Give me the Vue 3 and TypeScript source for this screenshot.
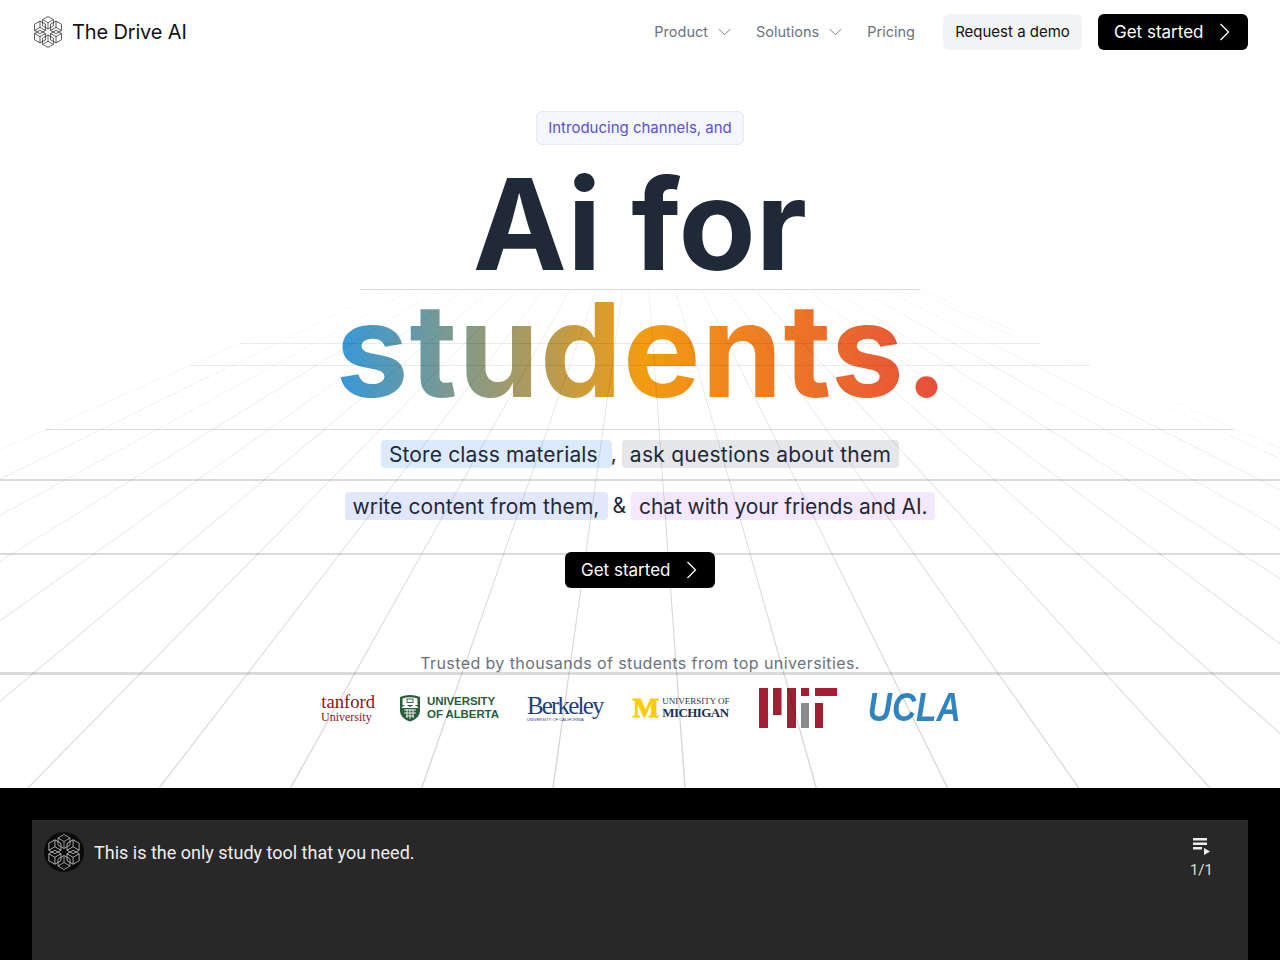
<script setup lang="ts">
const VX = 640
const VY = 165
const TOP = 289
const BOTTOM = 788

function wedge(offset: number): string {
  const at = (y: number) => VX + (offset * (y - VY)) / (BOTTOM - VY)
  const half = (y: number) => (0.75 * (y - VY)) / (BOTTOM - VY)
  return [
    `${at(TOP) - half(TOP)},${TOP}`,
    `${at(TOP) + half(TOP)},${TOP}`,
    `${at(BOTTOM) + half(BOTTOM)},${BOTTOM}`,
    `${at(BOTTOM) - half(BOTTOM)},${BOTTOM}`,
  ].join(' ')
}

const rays: string[] = []
for (let n = 0; n <= 10; n++) {
  rays.push(wedge(-87 - 131.3 * n))
  rays.push(wedge(45 + 131.3 * n))
}
rays.push(wedge(1407))

const rows = [
  { y: 289, x1: 360, x2: 920, h: 1, faint: false },
  { y: 343, x1: 240, x2: 1040, h: 1, faint: true },
  { y: 365, x1: 190, x2: 1090, h: 1, faint: true },
  { y: 429, x1: 46, x2: 1234, h: 1, faint: false },
  { y: 479, x1: 0, x2: 1280, h: 2, faint: false },
  { y: 553, x1: 0, x2: 1280, h: 2, faint: false },
  { y: 672, x1: 0, x2: 1280, h: 3, faint: false },
]

const cubeAngles = [0, 60, 120, 180, 240, 300]
</script>

<template>
  <div class="page">
    <header class="topbar">
      <div class="brand">
        <svg class="brand-mark" viewBox="-17 -17 34 34" aria-hidden="true">
          <g v-for="a in cubeAngles" :key="a" :transform="`rotate(${a})`" fill="none" stroke="#2a2a2a" stroke-width="0.75">
            <path d="M0 -16.500 L5.800 -13.200 L5.800 -6.500 L0 -3.200 L-5.800 -6.500 L-5.800 -13.200 Z" />
            <path d="M-5.800 -13.200 L0 -9.800 L5.800 -13.200 M0 -9.800 L0 -3.200" />
          </g>
        </svg>
        <span class="brand-name">The Drive AI</span>
      </div>
      <nav class="nav">
        <a class="nav-link">Product
          <svg class="chev" viewBox="0 0 14 8" aria-hidden="true"><path d="M1 1 L7 7 L13 1" /></svg>
        </a>
        <a class="nav-link">Solutions
          <svg class="chev" viewBox="0 0 14 8" aria-hidden="true"><path d="M1 1 L7 7 L13 1" /></svg>
        </a>
        <a class="nav-link">Pricing</a>
        <button class="btn-demo">Request a demo</button>
        <button class="btn-dark">Get started
          <svg class="arrow" viewBox="0 0 11 18" aria-hidden="true"><path d="M1.5 1 L9.5 9 L1.5 17" /></svg>
        </button>
      </nav>
    </header>

    <main class="hero">
      <div class="badge">Introducing channels, and</div>
      <h1 class="headline">
        <span class="line-one">Ai for</span>
        <span class="line-two">students.</span>
      </h1>
      <div class="pitch">
        <div class="pitch-row">
          <span class="chip chip-blue">Store class materials</span>
          <span class="joiner comma">,</span>
          <span class="chip chip-gray">ask questions about them</span>
        </div>
        <div class="pitch-row">
          <span class="chip chip-indigo">write content from them,</span>
          <span class="joiner">&amp;</span>
          <span class="chip chip-purple">chat with your friends and AI.</span>
        </div>
      </div>
      <button class="btn-dark cta">Get started
        <svg class="arrow" viewBox="0 0 11 18" aria-hidden="true"><path d="M1.5 1 L9.5 9 L1.5 17" /></svg>
      </button>
      <p class="trusted">Trusted by thousands of students from top universities.</p>
      <div class="logos">
        <div class="logo stanford">
          <span class="st-name">Stanford</span>
          <span class="st-sub">University</span>
        </div>
        <div class="logo alberta">
          <svg class="shield" viewBox="0 0 22 28" aria-hidden="true">
            <path d="M1 3 Q11 -1 21 3 L21 17 Q21 24 11 27.5 Q1 24 1 17 Z" fill="#275d38" />
            <path d="M3.5 4.5 Q11 2 18.500 4.500 L18.500 11 L3.500 11 Z" fill="#fff" />
            <rect x="8" y="5" width="6" height="3.500" fill="none" stroke="#275d38" stroke-width="0.9" />
            <path d="M3 13 L7 10.500 L11 13 L15 10.500 L19 13 L19 14 L3 14 Z" fill="#fff" />
            <path d="M5 16 H17 M5 19 H17 M7 22 H15 M8 15 V24 M11 15 V25 M14 15 V24" stroke="#fff" stroke-width="0.9" />
          </svg>
          <div class="al-text"><span>UNIVERSITY</span><span>OF ALBERTA</span></div>
        </div>
        <div class="logo berkeley">
          <span class="be-name">Berkeley</span>
          <span class="be-sub">UNIVERSITY OF CALIFORNIA</span>
        </div>
        <div class="logo michigan">
          <span class="mi-m">M</span>
          <div class="mi-text"><span class="mi-top">UNIVERSITY OF</span><span class="mi-bottom">MICHIGAN</span></div>
        </div>
        <svg class="logo mit" viewBox="0 0 78 40" aria-hidden="true">
          <rect x="0" y="0" width="9" height="40" fill="#a31f34" />
          <rect x="14" y="0" width="8.500" height="27" fill="#a31f34" />
          <rect x="28" y="0" width="9" height="40" fill="#a31f34" />
          <rect x="42" y="0" width="8" height="8" fill="#a31f34" />
          <rect x="42" y="15" width="8" height="25" fill="#8a8b8c" />
          <rect x="56" y="0" width="22" height="8" fill="#a31f34" />
          <rect x="56" y="15" width="8" height="25" fill="#a31f34" />
        </svg>
        <div class="logo ucla">UCLA</div>
      </div>
    </main>

    <svg class="grid" viewBox="0 0 1280 788" aria-hidden="true">
      <polygon v-for="(p, i) in rays" :key="i" :points="p" class="ray" />
      <rect
        v-for="r in rows"
        :key="r.y"
        :x="r.x1"
        :y="r.y"
        :width="r.x2 - r.x1"
        :height="r.h"
        :class="['row', { 'row-faint': r.faint }]"
      />
    </svg>

    <section class="video-band">
      <div class="player">
        <div class="player-head">
          <svg class="avatar" viewBox="-20 -20 40 40" aria-hidden="true">
            <circle r="20" fill="#0b0b0b" />
            <g v-for="a in cubeAngles" :key="a" :transform="`rotate(${a})`" fill="none" stroke="#bdbdbd" stroke-width="0.8">
              <path d="M0 -17.500 L6 -14 L6 -7 L0 -3.500 L-6 -7 L-6 -14 Z" />
              <path d="M-6 -14 L0 -10.500 L6 -14 M0 -10.500 L0 -3.500" />
            </g>
          </svg>
          <span class="video-title">This is the only study tool that you need.</span>
          <div class="queue">
            <svg class="queue-icon" viewBox="0 0 18 18" aria-hidden="true">
              <rect x="0" y="0" width="14" height="2.500" />
              <rect x="0" y="4.500" width="14" height="2.500" />
              <rect x="0" y="9" width="9" height="2.500" />
              <path d="M11 10 L17 13.500 L11 17 Z" />
            </svg>
            <span class="queue-count">1/1</span>
          </div>
        </div>
      </div>
    </section>
  </div>
</template>

<style>
html, body { margin: 0; background: #fff; }
</style>

<style scoped>
.page {
  position: relative;
  width: 1280px;
  height: 960px;
  overflow: hidden;
  background: #fff;
  font-family: Inter, "Liberation Sans", sans-serif;
}
.topbar {
  display: flex;
  align-items: center;
  justify-content: space-between;
  height: 36px;
  padding: 14px 32px 0;
}
.brand { display: flex; align-items: center; gap: 8px; }
.brand-mark { width: 32px; height: 32px; }
.brand-name { font-size: 20px; color: #111; letter-spacing: -0.15px; }
.nav { display: flex; align-items: center; }
.nav-link {
  display: flex;
  align-items: center;
  gap: 10px;
  margin-right: 25px;
  padding-bottom: 1px;
  font-size: 14.5px;
  color: #6b7280;
}
.chev { width: 13px; height: 8px; fill: none; stroke: #6b7280; stroke-width: 1; }
.btn-demo {
  height: 36px;
  width: 139px;
  margin-left: 3px;
  margin-right: 16px;
  padding: 0 0 1px;
  border: 0;
  border-radius: 6px;
  background: #f3f4f6;
  color: #111;
  font: 15px Inter, "Liberation Sans", sans-serif;
}
.btn-dark {
  display: flex;
  align-items: center;
  justify-content: space-between;
  width: 150px;
  height: 36px;
  padding: 0 18px 1px 16px;
  border: 0;
  border-radius: 6px;
  background: #000;
  color: #fff;
  font: 17px Inter, "Liberation Sans", sans-serif;
}
.arrow { width: 11px; height: 18px; fill: none; stroke: #fff; stroke-width: 1.300; }
.hero {
  display: flex;
  flex-direction: column;
  align-items: center;
  height: 738px;
  box-sizing: border-box;
  padding-top: 61px;
}
.badge {
  box-sizing: border-box;
  width: 208px;
  height: 34px;
  border: 1px solid #e5e9fb;
  border-radius: 6px;
  background: #f5f7ff;
  color: #5b50d6;
  font-size: 15px;
  line-height: 32px;
  text-align: center;
}
.headline {
  display: flex;
  flex-direction: column;
  align-items: center;
  margin: 0;
  font-weight: 700;
  line-height: 128px;
}
.line-one { margin-top: 15px; color: #1f2937; font-size: 126px; }
.line-two {
  margin-top: -2px;
  margin-left: 5px;
  padding: 0 1px;
  background: linear-gradient(90deg, #3498db, #f39c12, #e74c3c);
  -webkit-background-clip: text;
  background-clip: text;
  color: transparent;
  font-size: 130px;
  letter-spacing: 1px;
}
.pitch { display: flex; flex-direction: column; gap: 24px; margin-top: 26px; }
.pitch-row { display: flex; justify-content: center; align-items: center; gap: 5px; }
.chip {
  height: 28px;
  padding: 0 8px;
  border-radius: 4px;
  color: #1f2937;
  font-size: 21px;
  line-height: 29px;
  white-space: nowrap;
}
.chip-blue { padding-right: 14px; background: #dbeafe; letter-spacing: 0.15px; }
.chip-gray { background: #e5e7eb; letter-spacing: 0.25px; }
.chip-indigo { background: #e0e7ff; letter-spacing: 0.1px; }
.chip-purple { background: #f3e8ff; letter-spacing: -0.1px; }
.joiner { color: #1f2937; font-size: 21px; line-height: 28px; }
.comma { margin: 0 0 0 -6px; }
.cta { margin-top: 32px; }
.trusted { margin: 63px 0 0; color: #6b7280; font-size: 16px; line-height: 24px; letter-spacing: 0.4px; }
.logos {
  display: flex;
  align-items: center;
  gap: 29px;
  width: 640px;
  height: 40px;
  margin-top: 13px;
  overflow: hidden;
}
.logo { flex: none; }
.stanford {
  display: flex;
  flex-direction: column;
  margin-left: -9px;
  margin-right: -5px;
  font-family: "Liberation Serif", serif;
  color: #8c1515;
}
.st-name { font-size: 18.6px; line-height: 18px; }
.st-sub { font-size: 12px; line-height: 13px; margin-left: 10px; }
.alberta { display: flex; align-items: center; gap: 6px; margin-right: -1px; }
.shield { width: 22px; height: 28px; }
.al-text {
  display: flex;
  flex-direction: column;
  color: #275d38;
  font: 700 11.5px/13px "Liberation Sans", sans-serif;
  letter-spacing: -0.1px;
}
.berkeley {
  display: flex;
  flex-direction: column;
  color: #1f3f7f;
  font-family: "Liberation Serif", serif;
}
.be-name { font-size: 25px; line-height: 22px; letter-spacing: -1.800px; }
.be-sub { font: 4px/5px "Liberation Sans", sans-serif; letter-spacing: 0.05px; }
.michigan { display: flex; align-items: center; gap: 3px; width: 97px; margin-left: 1px; }
.mi-m {
  color: #ffcb05;
  font: 700 28px/20px "Liberation Serif", serif;
  -webkit-text-stroke: 1px #ffcb05;
}
.mi-text {
  display: flex;
  flex-direction: column;
  color: #1f3057;
  font-family: "Liberation Serif", serif;
  line-height: 1;
}
.mi-top { font-size: 9px; }
.mi-bottom { font-size: 13px; font-weight: 700; letter-spacing: -0.55px; }
.mit { width: 78px; height: 40px; }
.ucla {
  margin-left: 2px;
  color: #3284bf;
  font: italic 700 33.5px/40px "Liberation Sans", sans-serif;
  transform: scaleY(1.2);
}
.grid {
  position: absolute;
  left: 0;
  top: 0;
  width: 1280px;
  height: 788px;
  pointer-events: none;
}
.ray { fill: rgba(0, 0, 0, 0.16); }
.row { fill: rgba(0, 0, 0, 0.14); }
.row-faint { fill: rgba(0, 0, 0, 0.08); }
.video-band {
  box-sizing: border-box;
  height: 172px;
  padding: 32px 32px 0;
  background: #000;
}
.player { height: 140px; background: #282828; }
.player-head { display: flex; align-items: flex-start; padding: 12px 35px 0 12px; }
.avatar { flex: none; width: 40px; height: 40px; }
.video-title {
  flex: 1;
  margin-left: 10px;
  color: #eee;
  font: 18px/42px Roboto, sans-serif;
}
.queue { display: flex; flex-direction: column; align-items: center; gap: 6px; padding-top: 6px; }
.queue-icon { width: 18px; height: 18px; margin-left: 2px; fill: #eee; }
.queue-count { color: #ddd; font: 15px/16px Roboto, sans-serif; }
</style>
